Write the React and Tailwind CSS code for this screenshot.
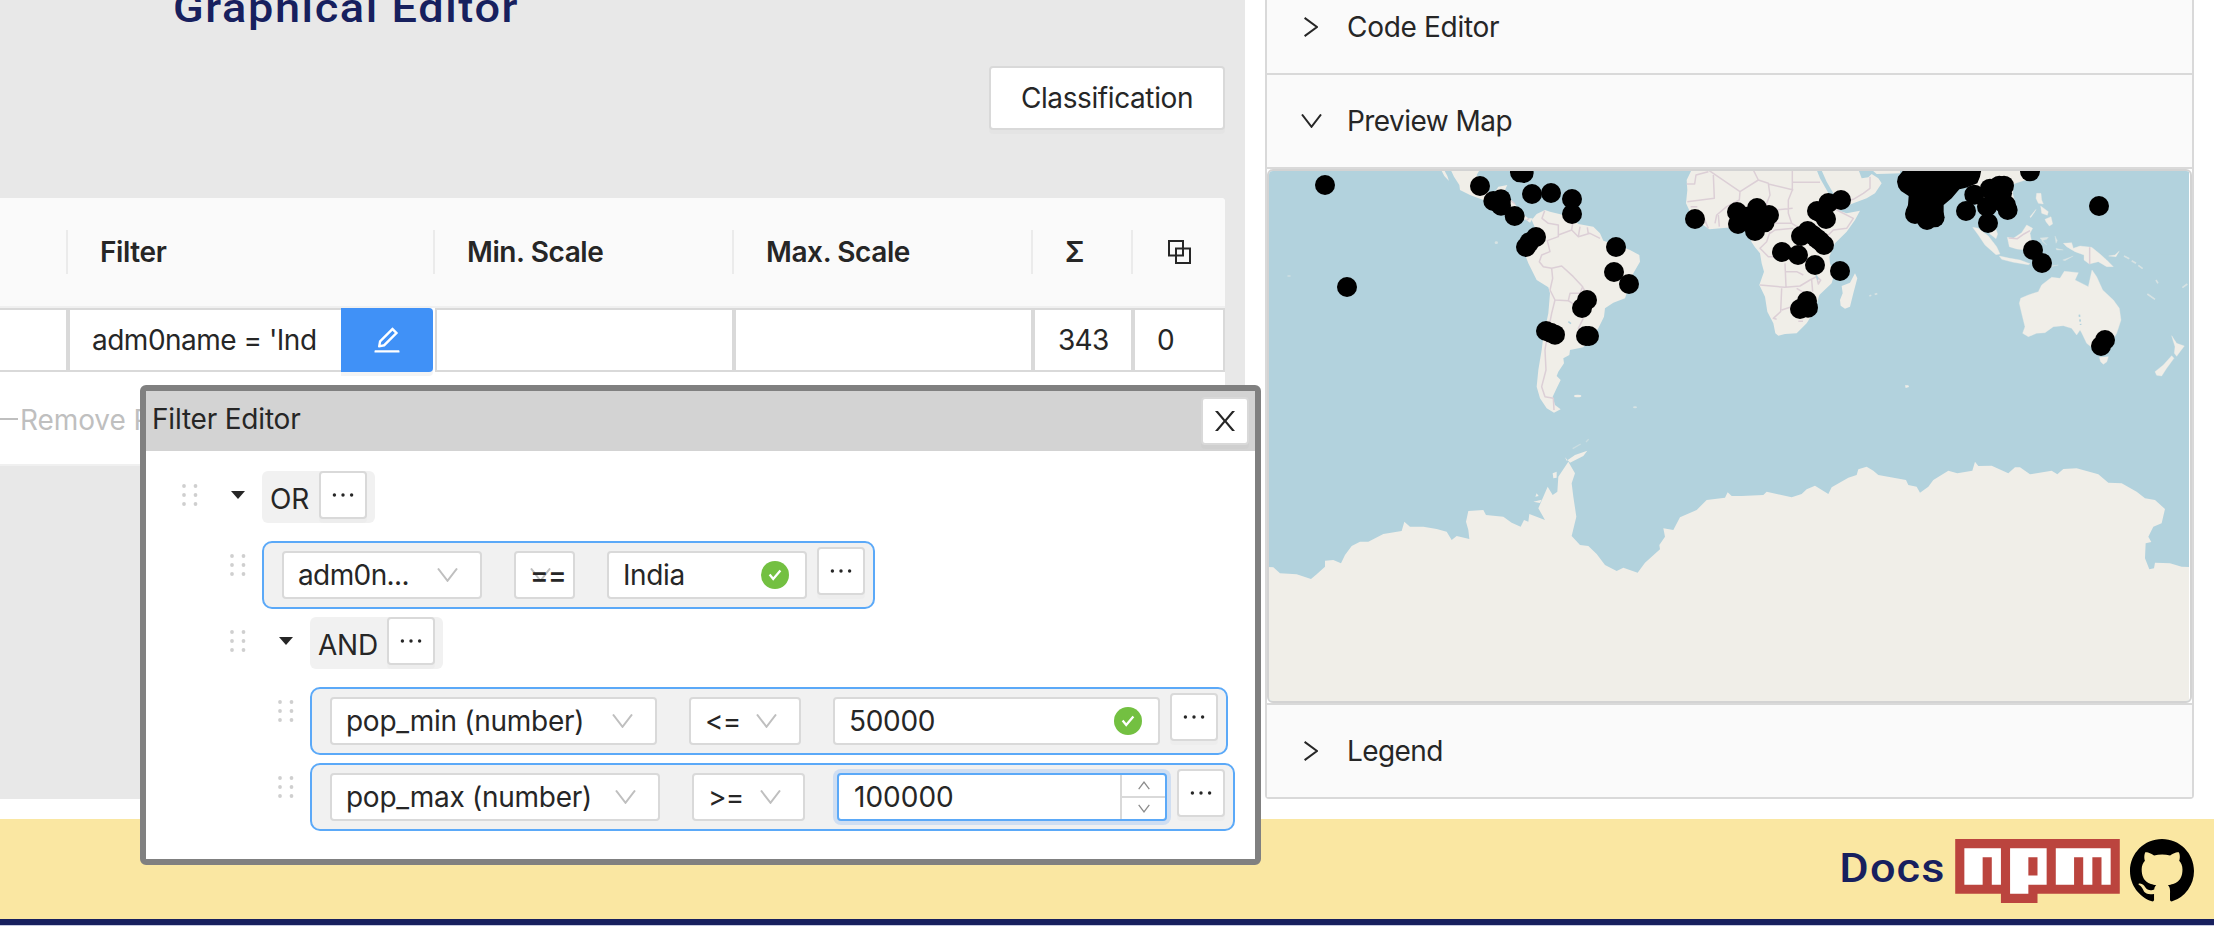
import React from "react";
import { AiOutlineEdit } from "react-icons/ai";

const DOTS_WEST = [
  [225, 555], [690, 558], [810, 517], [821, 519], [846, 582], [903, 579], [966, 597], [966, 642],
  [730, 603], [753, 598], [753, 617], [794, 648], [858, 711], [838, 727], [828, 741], [291, 861],
  [1098, 741], [1092, 816], [1137, 852], [1011, 900], [996, 924], [888, 993], [902, 998], [915, 1004],
  [1008, 1008], [1017, 1008],
];
const DOTS_AFRICA = [
  [105, 177], [231, 156], [234, 192], [291, 144], [285, 213], [327, 165], [314, 187], [270, 185], [258, 170],
  [290, 180], [471, 153], [505, 129], [543, 120], [498, 177], [485, 160], [423, 228], [443, 213],
  [458, 225], [470, 235], [480, 243], [492, 255], [366, 276], [414, 285], [465, 315], [540, 333],
  [441, 423], [420, 447], [436, 440], [444, 443],
];
const DOTS_EAST = [
  [555, 192], [591, 210], [614, 202], [708, 183], [733, 134], [780, 116], [808, 107], [822, 107],
  [816, 130], [815, 155], [828, 165], [833, 180], [771, 170], [774, 219], [900, 64], [1107, 168],
  [909, 300], [936, 339], [1125, 570], [1113, 588], [790, 128], [800, 140],
];

function Dots({ points }) {
  return points.map(([x, y]) => <circle key={`${x}-${y}`} cx={x} cy={y} r="30" fill="#000" />);
}

function WorldMap() {
  return (
    <svg className="block h-[530px] w-[920px]" viewBox="1269 171 920 530" aria-hidden="true">
      <rect x="1269" y="171" width="920" height="530" fill="#b2d2dd" />
      <g transform="translate(1250 0) scale(0.33333)">
        <g fill="#f0eee8" strokeLinejoin="round">
          <path d="M600 505 L612 530 L628 555 L630 570 L660 585 L700 600 L740 625 L775 645 L800 668 L825 658 L840 668 L848 655 L835 655 L815 640 L790 605 L780 597 L740 592 L735 575 L745 560 L772 555 L765 570 L740 578 L710 575 L690 540 L680 525 L692 505Z" />
          <path d="M571 505 L583 528 L597 543 L592 528 L580 505Z" />
          <path d="M845 660 L860 642 L885 630 L900 635 L940 645 L965 655 L985 672 L1030 680 L1050 700 L1060 722 L1100 735 L1140 750 L1168 765 L1170 785 L1150 820 L1140 850 L1125 895 L1090 908 L1065 925 L1062 950 L1045 985 L1020 1020 L1000 1042 L960 1050 L958 1065 L940 1075 L942 1090 L925 1115 L920 1128 L932 1140 L920 1165 L908 1190 L915 1215 L932 1228 L912 1238 L890 1225 L870 1195 L860 1160 L865 1110 L875 1050 L880 1010 L895 940 L900 880 L895 862 L860 840 L835 790 L818 745 L825 725 L850 700 L858 690Z" />
          <ellipse cx="983" cy="1188" rx="11" ry="4" />
          <ellipse cx="1155" cy="1222" rx="6" ry="3" opacity=".6" />
          <ellipse cx="739" cy="728" rx="5" ry="4" opacity=".6" />
          <ellipse cx="117" cy="828" rx="6" ry="2" opacity=".5" />
        </g>
        <g fill="none" stroke="#dccfd6" strokeWidth="4.5" strokeLinejoin="round">
          <path d="M884 632 L876 655 L895 670 L925 675 L925 710 L892 722 L900 755 L875 765 L868 785 L880 800 L905 805 L935 798 L970 830 L998 860 L990 880 L960 880 L955 902 L915 900 L900 870 L908 835 L905 805" />
          <path d="M925 705 L965 690 L985 710 L1020 700 L1050 715 M965 690 L970 660 M985 710 L990 680 M1015 702 L1012 682" />
          <path d="M915 900 L905 940 L893 1000 L885 1050 L888 1110 L875 1160 L885 1190 L910 1195 L912 1230" />
          <path d="M998 862 L1030 905 M955 902 L990 925 M1000 955 L985 985 L1010 1000 M840 738 L870 715 M830 660 L838 655 M780 600 L795 612" />
          <path d="M955 965 l8 6" stroke="#b2d2dd" />
        </g>
        <Dots points={DOTS_WEST} />
      </g>
      <g transform="translate(1660 160) scale(0.33333)">
        <g fill="#f0eee8">
          <path d="M97 25 L80 60 L82 90 L78 130 L92 160 L115 185 L148 208 L200 203 L235 205 L270 215 L274 245 L285 262 L300 280 L305 310 L312 335 L298 375 L315 410 L322 455 L340 490 L346 520 L355 527 L375 522 L410 520 L440 490 L465 450 L478 405 L515 370 L522 345 L510 310 L508 290 L525 250 L560 215 L585 180 L600 152 L560 160 L538 152 L520 125 L500 90 L480 55 L468 25Z" />
          <path d="M482 25 L500 65 L520 100 L530 125 L545 145 L580 130 L620 115 L645 100 L665 70 L655 55 L635 42 L625 52 L605 55 L594 25Z" />
          <path d="M630 25 L650 42 L680 41 L720 40 L720 25Z" />
          <path d="M585 340 L592 355 L580 400 L570 440 L555 446 L542 437 L540 420 L548 400 L545 378 L570 368Z" />
          <path d="M735 676 l10 0 l2 5 l-10 3z" />
        </g>
        <g fill="none" stroke="#dccfd6" strokeWidth="4.5" strokeLinejoin="round">
          <path d="M80 72 L104 72 L108 45 L145 35 M145 30 L240 95 L295 60 L280 30 M160 45 L163 115 L105 122 L82 125 M240 95 L238 120 L200 140 L170 165 L165 190" />
          <path d="M295 60 L325 70 L330 105 L318 135 L345 150 L398 145 M325 72 L400 90 M397 30 L397 90 L385 120 L385 160 L395 190 L420 205 M397 67 L480 67 M345 190 L395 190" />
          <path d="M520 130 L530 150 L580 175 L560 205 L520 210 L500 230 M330 220 L345 210 L400 205 M330 215 L320 245 L300 265 L325 290 L345 290" />
          <path d="M300 375 L375 382 L420 378 L450 360 L470 350 M375 310 L378 380 M365 385 L362 455 L340 475 L350 478 M378 335 L410 335 L430 345 M365 450 L395 440 M410 385 L435 400 M455 360 L458 395 M470 350 L482 360 L475 372Z" />
          <path d="M550 125 L580 118 L610 100 L630 85 L630 50 M130 170 L145 205 M92 140 L112 140 M175 165 L178 200 M415 484 l14 0" />
        </g>
        <path d="M468 345 l6 14" stroke="#b2d2dd" strokeWidth="5" />
        <Dots points={DOTS_AFRICA} />
      </g>
      <g transform="translate(1730 150) scale(0.33333)">
        <g fill="#f0eee8" stroke="#f0eee8" strokeLinejoin="round">
          <path d="M740 55 L930 55 L925 80 L880 92 L850 102 L848 130 L858 170 L840 190 L800 170 L785 175 L790 215 L803 252 L798 266 L780 252 L765 215 L740 165 L715 130Z" />
          <path d="M728 232 L745 235 L775 258 L800 290 L810 312 L798 314 L765 285 L745 255Z" />
          <path d="M808 318 L840 325 L870 330 L900 341 L895 344 L850 337 L815 328Z" />
          <path d="M832 262 L850 265 L875 248 L890 225 L908 235 L900 250 L905 275 L885 300 L860 297 L838 290Z" />
          <path d="M920 130 L933 130 L935 150 L940 162 L925 160 L918 145Z M945 208 L963 200 L968 222 L958 228 L948 215Z M932 168 L955 185 L952 196 L935 190Z M900 200 L918 178 L914 186 L902 203Z" />
          <path d="M930 264 L955 262 L950 268 L935 272 L950 285Z M975 258 L982 272 L978 280Z M978 295 L1000 300 L980 300Z M998 330 L1030 318 L1005 332Z M945 350 L985 345 L950 353Z" opacity=".7" />
          <path d="M1000 280 L1025 278 L1030 295 L1050 288 L1085 292 L1110 312 L1130 330 L1150 350 L1130 350 L1105 335 L1078 342 L1062 330 L1062 315 L1035 305 L1010 290Z" />
          <path d="M1136 318 L1155 315 L1168 303 L1158 320Z" />
          <path d="M1182 318 L1198 326 M1205 332 L1218 340 M1225 346 L1238 356 M1252 432 L1275 448 M1278 390 L1284 400 M1357 413 L1372 402 M418 438 L424 436 M434 433 L442 431" strokeWidth="5" opacity=".6" />
          <path d="M868 460 L872 445 L895 435 L925 425 L935 405 L965 382 L990 385 L1003 364 L1045 368 L1035 390 L1075 410 L1086 360 L1100 380 L1118 420 L1150 450 L1168 475 L1173 510 L1160 550 L1130 600 L1095 600 L1070 580 L1055 548 L1050 540 L1040 555 L1025 535 L1000 527 L970 530 L945 548 L920 550 L895 560 L878 550 L885 530 L875 490Z" />
          <path d="M1108 622 L1135 620 L1130 636 L1120 643 L1112 635Z" />
          <path d="M1325 557 L1340 580 L1363 588 L1350 605 L1340 619 L1333 610 L1335 590Z M1325 617 L1332 625 L1310 655 L1295 678 L1280 676 L1275 665 L1300 645Z" />
        </g>
        <path d="M1079 292 V342 M836 264 L862 266 L882 252 L900 242" fill="none" stroke="#dccfd6" strokeWidth="4.5" />
        <path d="M1048 494 L1052 525" fill="none" stroke="#b2d2dd" strokeWidth="5" strokeDasharray="7 7" />
        <path d="M525 55 L504 80 L501 95 L505 112 L513 123 L536 138 L534 165 L528 180 L585 232 L641 200 L641 165 L665 145 L688 118 L702 115 L712 112 L742 100 L750 80 L755 55Z" fill="#000" />
        <Dots points={DOTS_EAST} />
      </g>
      <g transform="translate(1250 430) scale(0.33333)" fill="#f0eee8">
        <path d="M50 410 L70 412 L90 430 L140 433 L183 447 L200 433 L225 410 L225 392 L250 390 L273 400 L285 375 L305 348 L330 335 L355 335 L400 312 L455 303 L463 275 L480 290 L520 290 L560 297 L590 305 L605 330 L620 318 L658 327 L655 300 L648 275 L655 243 L700 240 L708 255 L760 260 L785 278 L812 290 L822 270 L835 275 L838 252 L885 270 L865 235 L880 200 L893 170 L908 195 L922 185 L925 140 L955 95 L975 130 L965 160 L970 200 L979 260 L965 318 L990 345 L1015 348 L1040 372 L1065 405 L1100 423 L1120 413 L1163 428 L1185 398 L1230 358 L1228 345 L1245 320 L1240 295 L1270 300 L1290 262 L1340 240 L1370 210 L1425 203 L1433 187 L1445 198 L1475 198 L1540 195 L1550 185 L1625 202 L1655 192 L1670 178 L1695 167 L1735 192 L1745 172 L1795 143 L1820 135 L1825 118 L1850 110 L1870 122 L1885 135 L1968 150 L1975 165 L2000 170 L2010 188 L2035 170 L2050 150 L2095 122 L2122 130 L2167 122 L2175 95 L2185 108 L2225 107 L2275 130 L2295 112 L2310 112 L2340 133 L2405 122 L2422 133 L2440 117 L2480 115 L2545 133 L2575 158 L2615 160 L2660 185 L2685 205 L2715 210 L2745 237 L2735 280 L2710 290 L2695 320 L2704 336 L2687 340 L2685 385 L2698 418 L2712 415 L2715 398 L2760 400 L2795 410 L2820 411 V820 H50Z" />
        <path d="M945 82 L950 92 L975 75 L1012 62 L1000 78 L960 98Z M908 130 l12 -5 l0 18 l-10 2z M860 190 l6 8 l-10 2z M850 215 l25 -6 l-5 10z" />
        <path d="M968 56 L992 42 M1008 36 L1016 28" stroke="#f0eee8" strokeWidth="4" opacity=".4" />
      </g>
    </svg>
  );
}

function Chevron({ className }) {
  return (
    <svg className={`h-[14px] w-[21px] shrink-0 ${className}`} viewBox="0 0 21 14" fill="none" stroke="currentColor" strokeWidth="2">
      <path d="M1 .5 L10.5 12.8 L20 .5" />
    </svg>
  );
}

function ChevronRight() {
  return (
    <svg className="h-[20px] w-[14px]" viewBox="0 0 14 20" fill="none" stroke="currentColor" strokeWidth="2">
      <path d="M.6 .9 L13 10 L.6 19.1" />
    </svg>
  );
}

function Handle() {
  return (
    <svg className="mt-[13px] h-6 w-4 shrink-0" viewBox="0 0 16 24" fill="#cfcfcf">
      {[2, 11, 20].map((y) => (
        <g key={y}>
          <circle cx="2" cy={y} r="1.9" />
          <circle cx="13.5" cy={y} r="1.9" />
        </g>
      ))}
    </svg>
  );
}

function MoreButton() {
  return (
    <button className="flex h-12 w-12 shrink-0 justify-center rounded-[4px] border-2 border-[#d9d9d9] bg-white pt-[19px] shadow-[0_4px_0_rgba(0,0,0,0.016)]">
      <svg className="h-[6px] w-[22px]" viewBox="0 0 22 6" fill="#262626">
        <circle cx="2.4" cy="3" r="1.7" />
        <circle cx="11" cy="3" r="1.7" />
        <circle cx="19.6" cy="3" r="1.7" />
      </svg>
    </button>
  );
}

function Check() {
  return (
    <svg className="h-7 w-7" viewBox="0 0 28 28">
      <circle cx="14" cy="14" r="14" fill="#73c041" />
      <path d="M8.6 13.6 L12.2 18 L19.4 9.4" fill="none" stroke="#fff" strokeWidth="2.3" />
    </svg>
  );
}

const BOX = "flex h-12 shrink-0 items-center rounded-[4px] border-2 border-[#d9d9d9] bg-white";

function GroupRow({ indent, width, children }) {
  return (
    <div className={`flex items-start ${indent}`}>
      <Handle />
      <svg className="mt-5 ml-[33px] h-2 w-[14px] shrink-0" viewBox="0 0 14 8" fill="#262626">
        <path d="M0 0 H14 L7 8Z" />
      </svg>
      <div className={`ml-[17px] flex h-[52px] items-start justify-between rounded-[6px] bg-[#f1f1f1] pr-2 pl-2 ${width}`}>
        <span className="mt-[2px] leading-[52px] tracking-[-0.2px]">{children}</span>
        <MoreButton />
      </div>
    </div>
  );
}

function RuleRow({ indent, width, children }) {
  return (
    <div className={`flex items-start ${indent}`}>
      <Handle />
      <div className={`ml-4 flex h-[68px] items-start rounded-[10px] border-2 border-[#5ba9f8] bg-[#f1f1f1] pt-2 pl-[18px] ${width}`}>
        {children}
      </div>
    </div>
  );
}

function FilterEditor() {
  return (
    <section className="absolute top-[385px] left-[140px] h-[480px] w-[1121px] rounded-[6px] border-6 border-[#808080] bg-white">
      <header className="flex h-[60px] items-start justify-between bg-[#d3d3d3] pt-[6px] pr-[6px] pl-[6px]">
        <span className="leading-[44px] tracking-[-0.2px]">Filter Editor</span>
        <button className="flex h-12 w-12 items-center justify-center rounded-[4px] border-2 border-[#d9d9d9] bg-white shadow-[0_4px_0_rgba(0,0,0,0.016)]">
          <svg className="h-5 w-5" viewBox="0 0 20 20" fill="#262626" role="img" aria-label="Close">
            <path d="M0 0H2.9L10 8.6L17.1 0H20L11.5 10.1L20 20H17.1L10 11.6L2.9 20H0L8.5 10.1Z" />
          </svg>
        </button>
      </header>
      <div className="flex flex-col pt-5">
        <GroupRow indent="pl-9" width="w-[113px]">OR</GroupRow>
        <div className="mt-[18px]">
          <RuleRow indent="pl-[84px]" width="w-[613px]">
            <div className={`${BOX} w-[200px] justify-between pr-[22px] pl-[14px]`}>
              <span className="tracking-[-0.6px]">adm0n...</span>
              <Chevron className="text-[#bfbfbf]" />
            </div>
            <div className={`${BOX} relative ml-8 w-[61px] pl-[14px]`}>
              <Chevron className="absolute top-[15px] left-[14px] text-[#bfbfbf]" />
              <span className="relative font-medium tracking-[-0.6px]">==</span>
            </div>
            <div className={`${BOX} ml-8 w-[200px] justify-between pr-4 pl-[14px]`}>
              <span className="tracking-[-0.4px]">India</span>
              <Check />
            </div>
            <div className="-mt-1 ml-[10px]">
              <MoreButton />
            </div>
          </RuleRow>
        </div>
        <div className="mt-2">
          <GroupRow indent="pl-[84px]" width="w-[133px]">AND</GroupRow>
        </div>
        <div className="mt-[18px]">
          <RuleRow indent="pl-[132px]" width="w-[918px]">
            <div className={`${BOX} w-[327px] justify-between pr-[22px] pl-[14px]`}>
              <span className="tracking-[-0.27px]">pop_min (number)</span>
              <Chevron className="text-[#bfbfbf]" />
            </div>
            <div className={`${BOX} ml-8 w-[112px] justify-between pr-[22px] pl-[14px]`}>
              <span className="tracking-[-0.8px]">&lt;=</span>
              <Chevron className="text-[#bfbfbf]" />
            </div>
            <div className={`${BOX} ml-8 w-[327px] justify-between pr-4 pl-[14px]`}>
              <span className="tracking-[-0.3px]">50000</span>
              <Check />
            </div>
            <div className="-mt-1 ml-[10px]">
              <MoreButton />
            </div>
          </RuleRow>
        </div>
        <div className="mt-2">
          <RuleRow indent="pl-[132px]" width="w-[925px]">
            <div className={`${BOX} w-[330px] justify-between pr-[22px] pl-[14px]`}>
              <span className="tracking-[-0.27px]">pop_max (number)</span>
              <Chevron className="text-[#bfbfbf]" />
            </div>
            <div className={`${BOX} ml-8 w-[113px] justify-between pr-[22px] pl-[14px]`}>
              <span className="tracking-[-0.8px]">&gt;=</span>
              <Chevron className="text-[#bfbfbf]" />
            </div>
            <div className="ml-8 flex h-12 w-[330px] shrink-0 items-stretch rounded-[4px] border-2 border-[#5ba9f8] bg-white shadow-[0_0_0_4px_#cfdef2]">
              <span className="flex-1 pl-[15px] leading-[44px]">100000</span>
              <div className="flex w-[45px] flex-col border-l-2 border-[#d9d9d9] text-[#8c8c8c]">
                <div className="flex flex-1 items-center justify-center">
                  <svg className="h-[9px] w-3" viewBox="0 0 12 9" fill="none" stroke="currentColor" strokeWidth="1.3">
                    <path d="M.7 8.2 L6 1.2 L11.3 8.2" />
                  </svg>
                </div>
                <div className="flex flex-1 items-center justify-center border-t-2 border-[#d9d9d9]">
                  <svg className="h-[9px] w-3" viewBox="0 0 12 9" fill="none" stroke="currentColor" strokeWidth="1.3">
                    <path d="M.7 .8 L6 7.8 L11.3 .8" />
                  </svg>
                </div>
              </div>
            </div>
            <div className="-mt-1 ml-[10px]">
              <MoreButton />
            </div>
          </RuleRow>
        </div>
      </div>
    </section>
  );
}

const CELL = "flex h-16 items-center border-2 border-[#d9d9d9] bg-white";
const HEAD = "flex h-[108px] items-center justify-between font-semibold tracking-[-0.4px]";

function Separator() {
  return <span className="h-11 w-[2px] bg-[#ebebeb]" />;
}

function RuleTable() {
  return (
    <div className="mt-[68px] h-[268px] w-[1225px] overflow-hidden rounded-tr-[4px] border-b-2 border-[#f0f0f0] bg-white">
      <div className="grid h-[110px] grid-cols-[68px_367px_299px_299px_100px_92px] border-b-2 border-[#f0f0f0] bg-[#fafafa]">
        <div className={HEAD}><span /><Separator /></div>
        <div className={`${HEAD} pl-8`}><span>Filter</span><Separator /></div>
        <div className={`${HEAD} pl-8`}><span>Min. Scale</span><Separator /></div>
        <div className={`${HEAD} pl-8`}><span>Max. Scale</span><Separator /></div>
        <div className={`${HEAD} pl-8`}><span>Σ</span><Separator /></div>
        <div className={`${HEAD} pl-[35px]`}>
          <svg className="h-6 w-[23px]" viewBox="0 0 23 24" fill="none" stroke="#262626" strokeWidth="2">
            <rect x="1" y="1" width="14" height="14.5" />
            <rect x="8" y="8.5" width="14" height="14.5" />
          </svg>
        </div>
      </div>
      <div className="grid grid-cols-[68px_367px_299px_299px_100px_92px]">
        <div className={`${CELL} border-l-0`} />
        <div className="flex pr-[2px]">
          <div className={`${CELL} flex-1 border-r-0 pl-[22px] tracking-[-0.5px] whitespace-nowrap`}>adm0name = 'Ind</div>
          <button className="flex h-16 w-[92px] items-center justify-center rounded-r-[4px] bg-[#4091f7] text-white shadow-[0_4px_0_rgba(0,0,0,0.045)]">
            <AiOutlineEdit className="h-8 w-8" />
          </button>
        </div>
        <div className={CELL} />
        <div className={CELL} />
        <div className={`${CELL} pl-[23px] tracking-[-0.7px]`}>343</div>
        <div className={`${CELL} pl-[22px]`}>0</div>
      </div>
      <div className="flex h-[92px] items-center gap-[2px] pt-1 whitespace-nowrap text-[#bfbfbf]">
        <span className="mb-[3px] h-[2px] w-[18px] bg-[#bfbfbf]" />
        <span className="tracking-[-0.1px]">Remove R</span>
      </div>
    </div>
  );
}

function PanelHeader({ icon, children }) {
  return (
    <div className="flex h-[92px] items-center bg-[#fafafa] pl-[33px]">
      <span className="flex w-[22px] justify-center">{icon}</span>
      <span className="ml-[25px]">{children}</span>
    </div>
  );
}

function SidePanel() {
  return (
    <aside className="h-[799px] w-[929px] rounded-b-[4px] border-2 border-t-0 border-[#d9d9d9]">
      <div className="-mt-[19px] border-b-2 border-[#d9d9d9] tracking-[-0.3px]">
        <PanelHeader icon={<ChevronRight />}>Code Editor</PanelHeader>
      </div>
      <div className="border-b-2 border-[#d9d9d9] tracking-[-0.55px]">
        <PanelHeader icon={<Chevron className="" />}>Preview Map</PanelHeader>
      </div>
      <div className="border-b-2 border-[#d9d9d9]">
        <div className="overflow-hidden rounded-[6px] border-2 border-[#d3d3d3] bg-white">
          <WorldMap />
        </div>
      </div>
      <div className="tracking-[-0.6px]">
        <PanelHeader icon={<ChevronRight />}>Legend</PanelHeader>
      </div>
    </aside>
  );
}

export default function App() {
  return (
    <div className="relative flex h-[926px] w-[2214px] flex-col overflow-hidden bg-white font-['Inter','Liberation_Sans',sans-serif] text-[28px] text-[#262626]">
      <main className="flex h-[819px] shrink-0 items-start gap-5">
        <div className="h-[799px] w-[1245px] shrink-0 bg-[#e8e8e8]">
          <h1 className="ml-[173px] h-4 w-[400px] origin-left scale-x-[1.1] font-['Roboto',sans-serif] text-[41px] leading-[16px] font-medium tracking-[1.45px] text-[#17205e]">
            Graphical Editor
          </h1>
          <div className="flex justify-end pt-[50px] pr-5">
            <button className="h-16 w-[236px] rounded-[4px] border-2 border-[#d9d9d9] bg-white tracking-[-0.4px] shadow-[0_4px_0_rgba(0,0,0,0.016)]">
              Classification
            </button>
          </div>
          <RuleTable />
        </div>
        <SidePanel />
      </main>
      <footer className="flex h-[107px] items-start justify-end border-b border-[#c5cae0] bg-[#17205e]">
        <div className="flex h-[100px] w-full items-start justify-end bg-[#fae7a2] pt-5 pr-5">
          <span className="mr-[9px] origin-right scale-x-[1.1] font-['Roboto',sans-serif] text-[41px] leading-[58px] font-medium tracking-[1px] text-[#17205e]">Docs</span>
          <svg className="h-16 w-[165px]" viewBox="0 0 18 7">
            <path fill="#bb443e" d="M0,0h18v6H9v1H5V6H0V0z" />
            <path fill="#fff" d="M1,1v4h2V2h1v3h1V1H1z M6,1v5h2V5h2V1H6z M9,4H8V2h1V4z M11,1v4h2V2h1v3h1V2h1v3h1V1H11z" />
          </svg>
          <svg className="ml-[10px] h-16 w-16" viewBox="0 0 16 16" fill="#000">
            <path fillRule="evenodd" d="M8 0C3.58 0 0 3.58 0 8c0 3.54 2.29 6.53 5.47 7.59.4.07.55-.17.55-.38 0-.19-.01-.82-.01-1.49-2.01.37-2.53-.49-2.69-.94-.09-.23-.48-.94-.82-1.13-.28-.15-.68-.52-.01-.53.63-.01 1.08.58 1.23.82.72 1.21 1.87.87 2.33.66.07-.52.28-.87.51-1.07-1.78-.2-3.64-.89-3.64-3.95 0-.87.31-1.59.82-2.15-.08-.2-.36-1.02.08-2.12 0 0 .67-.21 2.2.82.64-.18 1.32-.27 2-.27.68 0 1.36.09 2 .27 1.53-1.04 2.2-.82 2.2-.82.44 1.1.16 1.92.08 2.12.51.56.82 1.27.82 2.15 0 3.07-1.87 3.75-3.65 3.95.29.25.54.73.54 1.48 0 1.07-.01 1.93-.01 2.2 0 .21.15.46.55.38A8.013 8.013 0 0016 8c0-4.42-3.58-8-8-8z" />
          </svg>
        </div>
      </footer>
      <FilterEditor />
    </div>
  );
}
